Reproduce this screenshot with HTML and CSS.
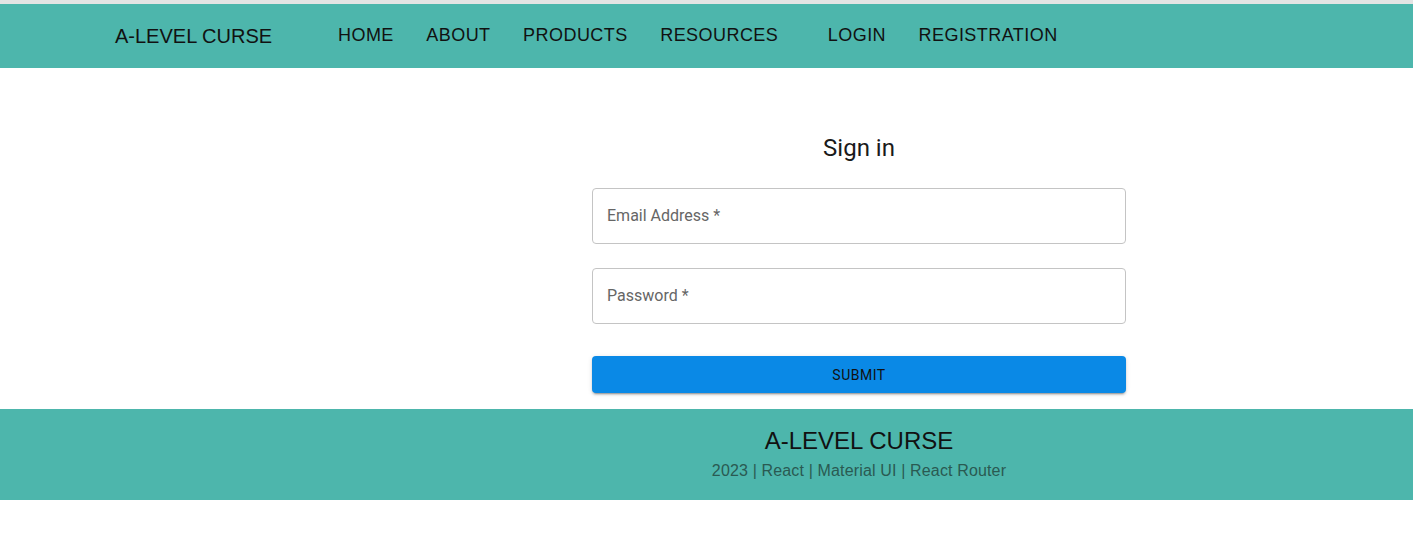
FILE: index.html
```html
<!DOCTYPE html>
<html lang="en">
<head>
<meta charset="utf-8">
<title>A-LEVEL CURSE</title>
<link rel="stylesheet" href="styles.css">
</head>
<body>
<header class="appbar">
  <div class="brand">A-LEVEL CURSE</div>
  <nav class="nav">
    <a class="nav-link">HOME</a>
    <a class="nav-link">ABOUT</a>
    <a class="nav-link">PRODUCTS</a>
    <a class="nav-link nav-link-wide">RESOURCES</a>
    <a class="nav-link">LOGIN</a>
    <a class="nav-link">REGISTRATION</a>
  </nav>
</header>
<main class="content">
  <section class="signin">
    <h1 class="signin-title">Sign in</h1>
    <form class="form">
      <div class="field"><span class="field-label">Email Address *</span></div>
      <div class="field"><span class="field-label">Password *</span></div>
      <button type="button" class="submit">SUBMIT</button>
    </form>
  </section>
</main>
<footer class="footer">
  <div class="footer-title">A-LEVEL CURSE</div>
  <div class="footer-sub">2023 | React | Material UI | React Router</div>
</footer>
</body>
</html>
```
FILE: styles.css
```css
html, body {
  margin: 0;
  padding: 0;
  background: #ffffff;
}
body {
  border-top: 4px solid #e4e4e4;
  font-family: "Liberation Sans", Arial, sans-serif;
  color: #111;
}
.appbar {
  background: #4db6ac;
  height: 64px;
  display: flex;
  align-items: center;
  padding-left: 115px;
}
.brand {
  font-size: 20px;
  color: #111;
  width: 223px;
  line-height: 1;
  padding-top: 0;
}
.nav {
  display: flex;
  gap: 32.5px;
  align-items: center;
  margin-top: -2px;
}
.nav-link {
  font-size: 18px;
  line-height: 1;
  letter-spacing: 0.45px;
  color: #111;
  cursor: pointer;
}
.nav-link-wide {
  margin-right: 17px;
}
.content {
  display: flex;
  justify-content: center;
  padding-left: 305px;
}
.signin {
  width: 534px;
  display: flex;
  flex-direction: column;
  align-items: center;
  padding-top: 64px;
  padding-bottom: 16px;
}
.signin-title {
  margin: 0;
  font-family: Roboto, "Liberation Sans", sans-serif;
  font-weight: 400;
  font-size: 24px;
  line-height: 32px;
  color: #1a1a1a;
}
.form {
  width: 100%;
  margin-top: 8px;
  display: flex;
  flex-direction: column;
}
.field {
  height: 56px;
  box-sizing: border-box;
  border: 1px solid #c4c4c4;
  border-radius: 4px;
  margin-top: 16px;
  margin-bottom: 8px;
  display: flex;
  align-items: center;
  padding-left: 14px;
  padding-bottom: 2px;
}
.field-label {
  font-family: Roboto, "Liberation Sans", sans-serif;
  font-size: 16px;
  color: #666;
}
.submit {
  margin-top: 24px;
  height: 37px;
  border: none;
  border-radius: 4px;
  background: #0a89e6;
  color: #111;
  font-family: Roboto, "Liberation Sans", sans-serif;
  font-size: 14px;
  font-weight: 400;
  letter-spacing: 0.5px;
  box-shadow: 0 3px 1px -2px rgba(0,0,0,0.2), 0 2px 2px 0 rgba(0,0,0,0.14), 0 1px 5px 0 rgba(0,0,0,0.12);
}
.footer {
  background: #4db6ac;
  height: 91px;
  box-sizing: border-box;
  padding-left: 305px;
  padding-top: 18px;
  display: flex;
  flex-direction: column;
  align-items: center;
}
.footer-title {
  font-size: 24px;
  line-height: 28px;
  color: #111;
}
.footer-sub {
  font-size: 16px;
  line-height: 24px;
  margin-top: 4px;
  letter-spacing: 0.15px;
  color: #2a5a52;
}
```
